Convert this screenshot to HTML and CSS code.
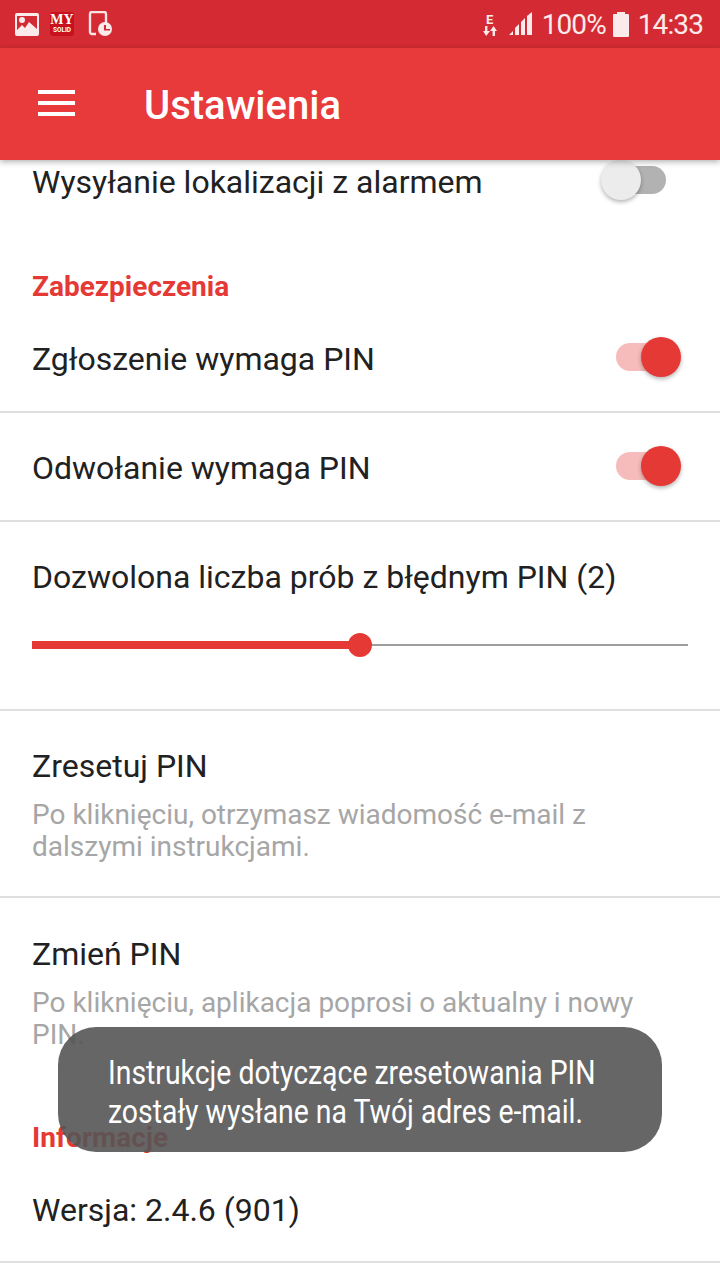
FILE: index.html
```html
<!DOCTYPE html>
<html lang="pl">
<head>
  <meta charset="UTF-8" />
  <meta name="viewport" content="width=device-width, initial-scale=1" />
  <title>Ustawienia</title>
  <link rel="stylesheet" href="styles.css">
</head>
<body>
  <div class="screen">
    <div class="status-bar">
      <div class="status-left">
        <svg width="26" height="24" viewBox="0 0 26 24">
          <path fill="#fbeaea" fill-rule="evenodd" d="M3 1h20a2 2 0 0 1 2 2v19a2 2 0 0 1-2 2H3a2 2 0 0 1-2-2V3a2 2 0 0 1 2-2zM3 4v14l5-5 3 3 4-6 8 7V4z"/>
          <circle cx="8" cy="8" r="3" fill="#fbeaea"/>
        </svg>
        <div class="mysolid"><span class="my">MY</span><span class="solid">SOLID</span></div>
        <svg width="24" height="26" viewBox="0 0 24 26">
          <path fill="none" stroke="#fbe3e3" stroke-width="2.4" d="M8 23H4a2 2 0 0 1-2-2V3a2 2 0 0 1 2-2h12a2 2 0 0 1 2 2v10"/>
          <circle cx="17" cy="18" r="7" fill="#fbeaea"/>
          <path fill="#d32a33" d="M16 14h2v4h4v1.5h-6z"/>
        </svg>
      </div>
      <div class="status-right">
        <div class="net">
          <span class="net-e">E</span>
          <svg width="14" height="10" viewBox="0 0 14 10">
            <path fill="#fbeaea" d="M2 0h2.4v5H7L3.2 10 0 5h2zM9.6 5H7l3.6-5L14 5h-2v5H9.6z"/>
          </svg>
        </div>
        <svg class="signal" width="26" height="26" viewBox="0 0 26 26">
          <path fill="#fbeaea" d="M1 24l4-4v4zM7 24v-7l4-4v11zM13 24V11l4-4v17zM19 24V5l5-4v23z"/>
        </svg>
        <span class="status-text">100%</span>
        <div class="battery"></div>
        <span class="status-text">14:33</span>
      </div>
    </div>

    <header class="app-bar">
      <div class="menu-icon"><span></span><span></span><span></span></div>
      <h1>Ustawienia</h1>
    </header>

    <main class="settings">
      <div class="row row-cut">
        <span class="title">Wysyłanie lokalizacji z alarmem</span>
        <div class="switch"><div class="thumb"></div></div>
      </div>

      <h2 class="section">Zabezpieczenia</h2>

      <div class="row row-first">
        <span class="title">Zgłoszenie wymaga PIN</span>
        <div class="switch on"><div class="thumb"></div></div>
      </div>
      <div class="row row-second">
        <span class="title">Odwołanie wymaga PIN</span>
        <div class="switch on"><div class="thumb"></div></div>
      </div>

      <div class="slider-row">
        <span class="title">Dozwolona liczba prób z błędnym PIN (2)</span>
        <div class="slider">
          <div class="slider-fill" style="width: 328px"></div>
          <div class="slider-knob"></div>
          <div class="slider-rest"></div>
        </div>
      </div>

      <div class="text-row">
        <div class="title">Zresetuj PIN</div>
        <p class="desc">Po kliknięciu, otrzymasz wiadomość e-mail z dalszymi instrukcjami.</p>
      </div>
      <div class="text-row no-line">
        <div class="title">Zmień PIN</div>
        <p class="desc">Po kliknięciu, aplikacja poprosi o aktualny i nowy PIN.</p>
      </div>

      <h2 class="section section-info">Informacje</h2>

      <div class="row row-version">
        <span class="title">Wersja: 2.4.6 (901)</span>
      </div>
    </main>

    <div class="toast">
      <span>Instrukcje dotyczące zresetowania PIN</span>
      <span>zostały wysłane na Twój adres e-mail.</span>
    </div>
  </div>
</body>
</html>
```

FILE: styles.css
```css
* {
  box-sizing: border-box;
}
html, body {
  margin: 0;
  padding: 0;
}
body {
  background-color: #fff;
  font-family: 'Roboto', sans-serif;
  color: #212121;
}
.screen {
  position: relative;
  width: 720px;
  height: 1280px;
  overflow: hidden;
  display: flex;
  flex-direction: column;
}
.status-bar {
  height: 48px;
  flex: none;
  background-color: #d32a33;
  display: flex;
  justify-content: space-between;
  align-items: center;
  padding: 0 17px 0 14px;
}
.status-left {
  display: flex;
  align-items: center;
  gap: 10px;
}
.mysolid {
  width: 24px;
  height: 24px;
  margin-right: 4px;
  background-color: #c8101e;
  border-radius: 3px;
  display: flex;
  flex-direction: column;
  align-items: center;
  color: #fff;
  font-weight: 700;
  line-height: 1;
}
.my {
  font-family: 'Liberation Serif', serif;
  font-size: 14px;
  margin-top: 1px;
  height: 13px;
}
.solid {
  font-size: 6.5px;
  margin-top: 1px;
}
.status-right {
  display: flex;
  align-items: center;
}
.net {
  width: 16px;
  margin-right: 10px;
  display: flex;
  flex-direction: column;
  align-items: center;
  gap: 2px;
  color: #fbeaea;
  font-weight: 700;
  line-height: 1;
}
.net-e {
  font-size: 13px;
  height: 11px;
}
.signal {
  margin-right: 8px;
}
.status-text {
  color: #fbeaea;
  font-size: 28px;
  letter-spacing: -0.9px;
}
.battery {
  position: relative;
  width: 16px;
  height: 23px;
  background-color: #fbeaea;
  border-radius: 1px;
  margin: 2px 9px 0 7px;
}
.battery::before {
  content: "";
  position: absolute;
  top: -2px;
  left: 4px;
  width: 8px;
  height: 2px;
  background-color: #fbeaea;
}
.app-bar {
  position: relative;
  z-index: 2;
  height: 112px;
  flex: none;
  background-color: #e83a3a;
  box-shadow: 0 2px 6px rgba(0,0,0,0.3);
  display: flex;
  align-items: center;
  padding-left: 38px;
}
.menu-icon {
  width: 37px;
  display: flex;
  flex-direction: column;
  gap: 7px;
  margin-right: 69px;
  margin-top: -2px;
}
.menu-icon span {
  display: block;
  height: 4px;
  background-color: #fff;
}
.app-bar h1 {
  margin: 0;
  margin-top: 2px;
  color: #fff;
  font-size: 40px;
  font-weight: 500;
}
.title {
  font-size: 32px;
  line-height: 38px;
  color: #212121;
}
.row {
  height: 109px;
  padding: 0 32px;
  display: flex;
  justify-content: space-between;
  align-items: center;
  border-bottom: 2px solid #e0e0e0;
}
.row .title {
  margin-top: 4px;
}
.row-cut {
  height: 40px;
  border-bottom: none;
}
.row-first {
  height: 110px;
}
.row-second {
  padding-bottom: 2px;
}
.section {
  margin: 0;
  padding: 0 32px;
  height: 32px;
  margin-top: 71px;
  line-height: 32px;
  font-size: 28px;
  font-weight: 700;
  color: #e53935;
}
.switch {
  position: relative;
  width: 50px;
  height: 28px;
  margin-right: 22px;
  border-radius: 14px;
  background-color: #b2b2b2;
}
.switch .thumb {
  position: absolute;
  top: -6px;
  left: -15px;
  width: 40px;
  height: 40px;
  border-radius: 50%;
  background-color: #ececec;
  box-shadow: 0 2px 4px rgba(0,0,0,0.3);
}
.switch.on {
  background-color: #f6bcbc;
  margin-right: 11px;
  width: 61px;
}
.switch.on .thumb {
  left: auto;
  right: -4px;
  background-color: #e53935;
}
.slider-row {
  height: 189px;
  padding: 36px 32px 0;
  border-bottom: 2px solid #e0e0e0;
}
.slider {
  margin-top: 37px;
  display: flex;
  align-items: center;
  height: 24px;
}
.slider-fill {
  height: 8px;
  flex: none;
  margin-right: -12px;
  background-color: #e53935;
}
.slider-knob {
  width: 24px;
  height: 24px;
  flex: none;
  position: relative;
  border-radius: 50%;
  background-color: #e53935;
}
.slider-rest {
  flex: 1;
  height: 2px;
  background-color: #9e9e9e;
}
.text-row {
  height: 187px;
  padding: 36px 32px 0;
  border-bottom: 2px solid #e0e0e0;
}
.text-row.no-line {
  height: auto;
  padding-top: 37px;
  border-bottom: none;
}
.desc {
  margin: 14px 0 0;
  font-size: 28px;
  line-height: 32px;
  color: #a6a6a6;
}
.section-info {
  margin-top: 71px;
}
.row-version {
  height: 109px;
}
.toast {
  position: absolute;
  left: 58px;
  top: 1027px;
  width: 604px;
  height: 125px;
  z-index: 3;
  padding: 26px 0 0 50px;
  background-color: rgba(85,85,85,0.9);
  border-radius: 38px;
  color: #fff;
  font-size: 33px;
  line-height: 39px;
  white-space: nowrap;
}
.toast span {
  display: block;
  transform: scaleX(0.86);
  transform-origin: left center;
}
```
